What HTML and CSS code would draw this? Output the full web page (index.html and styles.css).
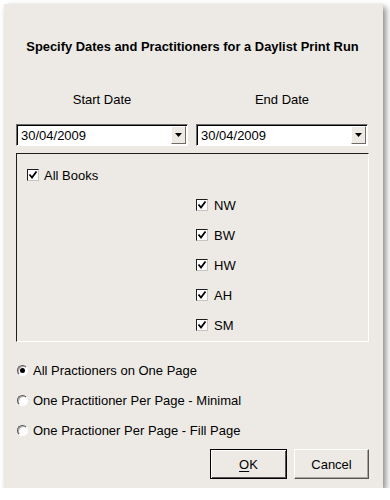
FILE: index.html
```html
<!DOCTYPE html>
<html lang="en">
<head>
  <meta charset="UTF-8" />
  <title>Daylist Print Run</title>
  <link rel="stylesheet" href="styles.css">
</head>
<body>
  <div class="dialog">
    <h1 class="title">Specify Dates and Practitioners for a Daylist Print Run</h1>

    <div class="dates">
      <div class="date-col">
        <div class="date-label">Start Date</div>
        <div class="combo">
          <span class="combo-text">30/04/2009</span>
          <span class="combo-btn"><svg width="7" height="4" viewBox="0 0 7 4"><path d="M0 0H7L3.5 4Z" fill="#000"/></svg></span>
        </div>
      </div>
      <div class="date-col">
        <div class="date-label">End Date</div>
        <div class="combo">
          <span class="combo-text">30/04/2009</span>
          <span class="combo-btn"><svg width="7" height="4" viewBox="0 0 7 4"><path d="M0 0H7L3.5 4Z" fill="#000"/></svg></span>
        </div>
      </div>
    </div>

    <div class="books">
      <div class="row all-books"><span class="check"></span>All Books</div>
      <div class="book-list">
        <div class="row"><span class="check"></span>NW</div>
        <div class="row"><span class="check"></span>BW</div>
        <div class="row"><span class="check"></span>HW</div>
        <div class="row"><span class="check"></span>AH</div>
        <div class="row"><span class="check"></span>SM</div>
      </div>
    </div>

    <div class="radios">
      <div class="row"><span class="radio on"></span>All Practioners on One Page</div>
      <div class="row"><span class="radio"></span>One Practitioner Per Page - Minimal</div>
      <div class="row"><span class="radio"></span>One Practioner Per Page - Fill Page</div>
    </div>

    <div class="buttons">
      <button class="btn default"><u>O</u>K</button>
      <button class="btn">Cancel</button>
    </div>
  </div>
</body>
</html>
```

FILE: styles.css
```css
body {
  margin: 0;
  padding: 4px 0 0 4px;
  background: #ffffff;
  font-family: 'Liberation Sans', Arial, sans-serif;
  color: #000;
}
.dialog {
  width: 379px;
  height: 484px;
  box-sizing: border-box;
  padding: 35px 14px 0 12px;
  background: #edeae6;
  box-shadow: 3px 3px 6px rgba(0, 0, 0, 0.45);
}
.title {
  margin: 0;
  font-size: 12.9px;
  line-height: 15px;
  font-weight: bold;
  text-align: center;
}
.dates {
  margin-top: 38px;
  display: grid;
  grid-template-columns: 172px 172px;
  gap: 8px;
}
.date-label {
  font-size: 13px;
  line-height: 16px;
  text-align: center;
  margin-bottom: 16px;
}
.combo {
  height: 22px;
  box-sizing: border-box;
  display: flex;
  align-items: center;
  background: #fff;
  border: 1px solid;
  border-color: #6f6d6a #fff #fff #6f6d6a;
  box-shadow: inset 1px 1px 0 #000;
  padding: 1px 1px 1px 4px;
}
.combo-text {
  flex: 1;
  font-size: 13px;
  padding-top: 1px;
}
.combo-btn {
  width: 15px;
  height: 18px;
  box-sizing: border-box;
  display: flex;
  align-items: center;
  justify-content: center;
  background: #edeae6;
  border: 1px solid;
  border-color: #fff #6f6d6a #6f6d6a #fff;
}
.books {
  margin-top: 7px;
  height: 189px;
  box-sizing: border-box;
  border: 1px solid;
  border-color: #1e1e1e #fff #fff #1e1e1e;
  padding: 6px 0 0 10px;
}
.row {
  height: 30px;
  display: flex;
  align-items: center;
  font-size: 13px;
}
.book-list {
  margin-left: 169px;
}
.check {
  width: 12px;
  height: 12px;
  box-sizing: border-box;
  margin-right: 6px;
  background: #fff url("data:image/svg+xml,%3Csvg xmlns='http://www.w3.org/2000/svg' width='10' height='10'%3E%3Cpath d='M1.5 4.5L4 7.5L8.5 1.5' fill='none' stroke='%23000' stroke-width='1.8'/%3E%3C/svg%3E") no-repeat center;
  border: 1px solid;
  border-color: #1e1e1e #c8c5c0 #c8c5c0 #1e1e1e;
}
.all-books .check {
  margin-right: 5px;
}
.radios {
  margin-top: 13px;
}
.radios .row {
  padding-left: 1px;
}
.radio {
  width: 11px;
  height: 11px;
  box-sizing: border-box;
  margin-right: 5px;
  border-radius: 50%;
  background: #fff;
  border: 1px solid;
  border-color: #555 #fff #fff #555;
  box-shadow: inset 1px 1px 0 #aaa;
  position: relative;
}
.radio.on::after {
  content: "";
  position: absolute;
  left: 2px;
  top: 2px;
  width: 5px;
  height: 5px;
  border-radius: 50%;
  background: #000;
}
.buttons {
  margin-top: 4px;
  display: flex;
  justify-content: flex-end;
  gap: 7px;
}
.btn {
  height: 30px;
  width: 75px;
  box-sizing: border-box;
  font-family: inherit;
  font-size: 13px;
  color: #000;
  background: #edeae6;
  border: 1px solid;
  border-color: #fff #555 #555 #fff;
  box-shadow: inset -1px -1px 0 #a8a5a0;
  padding: 0;
}
.btn.default {
  width: 77px;
  border: 1px solid #000;
  box-shadow: inset 1px 1px 0 #fff, inset -1px -1px 0 #555;
}
.btn u {
  text-decoration-thickness: 1px;
  text-underline-offset: 2px;
}
```
